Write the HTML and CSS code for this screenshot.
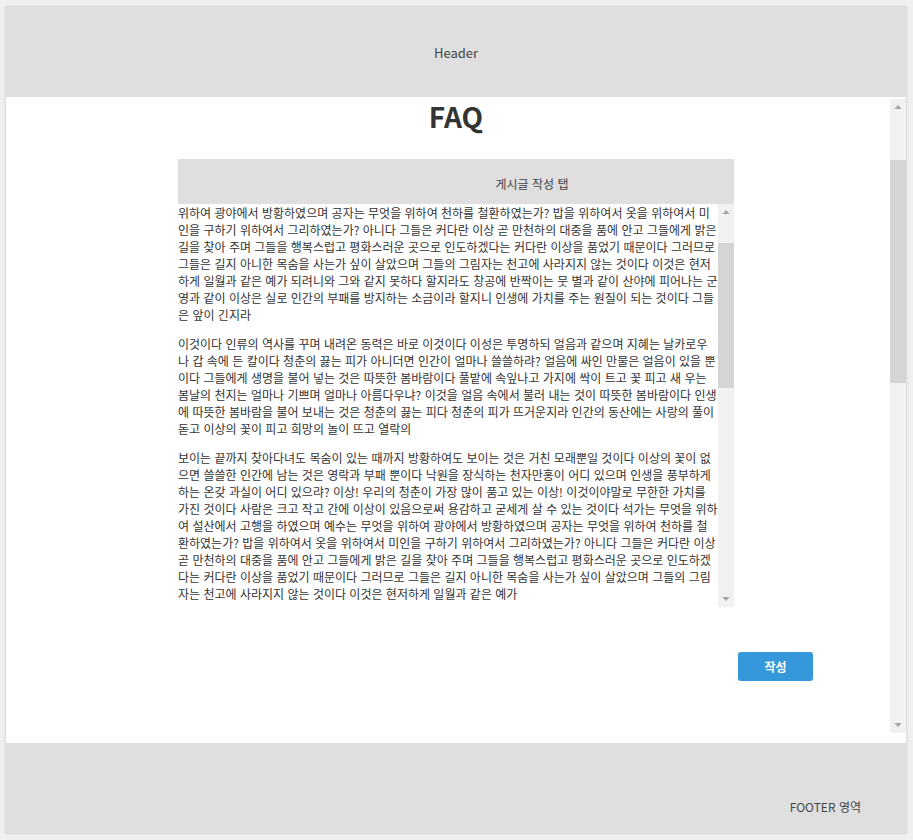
FILE: index.html
```html
<!DOCTYPE html>
<html lang="ko">
<head>
<meta charset="utf-8">
<title>FAQ</title>
<link rel="stylesheet" href="styles.css">
</head>
<body>
<div class="app">
  <header class="app-header">Header</header>
  <main class="app-main">
    <div class="main-scroll" id="mainScroll">
      <div class="page">
        <div class="column">
          <h1 class="faq-title">FAQ</h1>
          <div class="tab-bar"><span class="tab-label">게시글 작성 탭</span></div>
          <div class="post-body">
            <div class="post-text" id="postText">
              <p>청춘! 이는 듣기만 하여도 가슴이 설레는 말이다 청춘! 너의 두 손을 가슴에 대고 물방아 같은 심장의 고동을 들어 보라 청춘의 피는 끓는다 끓는 피에 뛰노는 심장은 거선의 기관과 같이 힘있다 이것이다 인류의 역사를 꾸며 내려온 동력은 바로 이것이다</p>
              <p class="start">위하여 광야에서 방황하였으며 공자는 무엇을 위하여 천하를 철환하였는가? 밥을 위하여서 옷을 위하여서 미인을 구하기 위하여서 그리하였는가? 아니다 그들은 커다란 이상 곧 만천하의 대중을 품에 안고 그들에게 밝은 길을 찾아 주며 그들을 행복스럽고 평화스러운 곳으로 인도하겠다는 커다란 이상을 품었기 때문이다 그러므로 그들은 길지 아니한 목숨을 사는가 싶이 살았으며 그들의 그림자는 천고에 사라지지 않는 것이다 이것은 현저하게 일월과 같은 예가 되려니와 그와 같지 못하다 할지라도 창공에 반짝이는 뭇 별과 같이 산야에 피어나는 군영과 같이 이상은 실로 인간의 부패를 방지하는 소금이라 할지니 인생에 가치를 주는 원질이 되는 것이다 그들은 앞이 긴지라</p>
              <p>이것이다 인류의 역사를 꾸며 내려온 동력은 바로 이것이다 이성은 투명하되 얼음과 같으며 지혜는 날카로우나 갑 속에 든 칼이다 청춘의 끓는 피가 아니더면 인간이 얼마나 쓸쓸하랴? 얼음에 싸인 만물은 얼음이 있을 뿐이다 그들에게 생명을 불어 넣는 것은 따뜻한 봄바람이다 풀밭에 속잎나고 가지에 싹이 트고 꽃 피고 새 우는 봄날의 천지는 얼마나 기쁘며 얼마나 아름다우냐? 이것을 얼음 속에서 불러 내는 것이 따뜻한 봄바람이다 인생에 따뜻한 봄바람을 불어 보내는 것은 청춘의 끓는 피다 청춘의 피가 뜨거운지라 인간의 동산에는 사랑의 풀이 돋고 이상의 꽃이 피고 희망의 놀이 뜨고 열락의</p>
              <p>보이는 끝까지 찾아다녀도 목숨이 있는 때까지 방황하여도 보이는 것은 거친 모래뿐일 것이다 이상의 꽃이 없으면 쓸쓸한 인간에 남는 것은 영락과 부패 뿐이다 낙원을 장식하는 천자만홍이 어디 있으며 인생을 풍부하게 하는 온갖 과실이 어디 있으랴? 이상! 우리의 청춘이 가장 많이 품고 있는 이상! 이것이야말로 무한한 가치를 가진 것이다 사람은 크고 작고 간에 이상이 있음으로써 용감하고 굳세게 살 수 있는 것이다 석가는 무엇을 위하여 설산에서 고행을 하였으며 예수는 무엇을 위하여 광야에서 방황하였으며 공자는 무엇을 위하여 천하를 철환하였는가? 밥을 위하여서 옷을 위하여서 미인을 구하기 위하여서 그리하였는가? 아니다 그들은 커다란 이상 곧 만천하의 대중을 품에 안고 그들에게 밝은 길을 찾아 주며 그들을 행복스럽고 평화스러운 곳으로 인도하겠다는 커다란 이상을 품었기 때문이다 그러므로 그들은 길지 아니한 목숨을 사는가 싶이 살았으며 그들의 그림자는 천고에 사라지지 않는 것이다 이것은 현저하게 일월과 같은 예가</p>
              <p>새가 운다 사랑의 풀이 없으면 인간은 사막이다 오아시스도 없는 사막이다 보이는 끝까지 찾아다녀도 목숨이 있는 때까지 방황하여도 보이는 것은 거친 모래뿐일 것이다 이상의 꽃이 없으면 쓸쓸한 인간에 남는 것은 영락과 부패 뿐이다 낙원을 장식하는 천자만홍이 어디 있으며 인생을 풍부하게 하는 온갖 과실이 어디 있으랴? 이상! 우리의 청춘이 가장 많이 품고 있는 이상! 이것이야말로 무한한 가치를 가진 것이다 사람은 크고 작고 간에 이상이 있음으로써 용감하고 굳세게 살 수 있는 것이다 석가는 무엇을 위하여 설산에서 고행을 하였으며 예수는 무엇을 위하여 광야에서 방황하였으며 공자는 무엇을 위하여 천하를 철환하였는가? 밥을 위하여서 옷을 위하여서 미인을 구하기 위하여서 그리하였는가? 아니다 그들은 커다란 이상 곧 만천하의 대중을 품에 안고 그들에게 밝은 길을 찾아 주며 그들을 행복스럽고 평화스러운 곳으로 인도하겠다는 커다란 이상을 품었기 때문이다</p>
              <p>그러므로 그들은 길지 아니한 목숨을 사는가 싶이 살았으며 그들의 그림자는 천고에 사라지지 않는 것이다 이것은 현저하게 일월과 같은 예가 되려니와 그와 같지 못하다 할지라도 창공에 반짝이는 뭇 별과 같이 산야에 피어나는 군영과 같이 이상은 실로 인간의 부패를 방지하는 소금이라 할지니 인생에 가치를 주는 원질이 되는 것이다 그들은 앞이 긴지라 착목하는 곳이 원대하고 그들은 피가 더운지라 실현에 대한 자신과 용기가 있다 그러므로 그들은 이상의 보배를 능히 품으며 그들의 이상은 아름답고 소담스러운 열매를 맺어 우리 인생을 풍부하게 하는 것이다</p>
              <p>보라, 청춘을! 그들의 몸이 얼마나 튼튼하며 그들의 피부가 얼마나 생생하며 그들의 눈에 무엇이 타오르고 있는가? 우리 눈이 그것을 보는 때에 우리의 귀는 생의 찬미를 듣는다 그것은 웅대한 관현악이며 미묘한 교향악이다 뼈 끝에 스며들어 가는 열락의 소리다 이것은 피어나기 전인 유소년에게서 구하지 못할 바이며 시들어 가는 노년에게서 구하지 못할 바이며 오직 우리 청춘에서만 구할 수 있는 것이다 청춘은 인생의 황금시대다 우리는 이 황금시대의 가치를 충분히 발휘하기 위하여 이 황금시대를 영원히 붙잡아 두기 위하여 힘차게 노래하며 힘차게 약동하자 청춘! 이는 듣기만 하여도 가슴이 설레는 말이다 청춘! 너의 두 손을 가슴에 대고 물방아 같은 심장의 고동을 들어 보라 청춘의 피는 끓는다 끓는 피에 뛰노는 심장은 거선의 기관과 같이 힘있다 이것이다 인류의 역사를 꾸며 내려온 동력은 바로 이것이다 이성은 투명하되 얼음과 같으며 지혜는 날카로우나 갑 속에 든 칼이다</p>
              <p>청춘의 끓는 피가 아니더면 인간이 얼마나 쓸쓸하랴? 얼음에 싸인 만물은 얼음이 있을 뿐이다 그들에게 생명을 불어 넣는 것은 따뜻한 봄바람이다 풀밭에 속잎나고 가지에 싹이 트고 꽃 피고 새 우는 봄날의 천지는 얼마나 기쁘며 얼마나 아름다우냐? 이것을 얼음 속에서 불러 내는 것이 따뜻한 봄바람이다 인생에 따뜻한 봄바람을 불어 보내는 것은 청춘의 끓는 피다 청춘의 피가 뜨거운지라 인간의 동산에는 사랑의 풀이 돋고 이상의 꽃이 피고 희망의 놀이 뜨고 열락의 새가 운다 사랑의 풀이 없으면 인간은 사막이다 오아시스도 없는 사막이다 보이는 끝까지 찾아다녀도 목숨이 있는 때까지 방황하여도 보이는 것은 거친 모래뿐일 것이다</p>
            </div>
            <div class="vscroll" data-target="postText">
              <span class="vscroll-btn"><svg width="16" height="16" viewBox="0 0 16 16"><polygon points="4.5,10 11.5,10 8,6" fill="#a3a3a3"/></svg></span>
              <div class="vscroll-rail"><div class="vscroll-thumb"></div></div>
              <span class="vscroll-btn"><svg width="16" height="16" viewBox="0 0 16 16"><polygon points="4.5,6 11.5,6 8,10" fill="#a3a3a3"/></svg></span>
            </div>
          </div>
        </div>
        <div class="actions">
          <button class="btn-submit" type="button">작성</button>
        </div>
      </div>
    </div>
    <div class="vscroll" data-target="mainScroll">
      <span class="vscroll-btn"><svg width="16" height="16" viewBox="0 0 16 16"><polygon points="4.5,10 11.5,10 8,6" fill="#a3a3a3"/></svg></span>
      <div class="vscroll-rail"><div class="vscroll-thumb"></div></div>
      <span class="vscroll-btn"><svg width="16" height="16" viewBox="0 0 16 16"><polygon points="4.5,6 11.5,6 8,10" fill="#a3a3a3"/></svg></span>
    </div>
  </main>
  <footer class="app-footer">FOOTER 영역</footer>
</div>
<script src="script.js"></script>
</body>
</html>
```

FILE: styles.css
```css
html, body {
  margin: 0;
  padding: 0;
}
body {
  background: #f0f0f0;
  font-family: "Noto Sans CJK KR", "Noto Sans", sans-serif;
  font-size: 12px;
  color: #333;
}
.app {
  margin: 6px 6px 6px 5px;
  height: 828px;
  box-sizing: border-box;
  border: 1px solid #dadada;
  box-shadow: 0 0 3px rgba(0, 0, 0, 0.06);
  display: flex;
  flex-direction: column;
  background: #fff;
}
.app-header {
  height: 90px;
  flex: none;
  background: #dfdfdf;
  display: flex;
  align-items: center;
  justify-content: center;
  font-size: 13px;
  color: #444;
}
.app-main {
  flex: 1;
  min-height: 0;
  background: #fff;
  padding: 2px 0 10px;
  display: flex;
}
.main-scroll {
  flex: 1;
  min-width: 0;
  overflow-y: auto;
  scrollbar-width: none;
  position: relative;
}
.page {
  padding: 128px 0 1001px 172px;
}
.column {
  width: 556px;
}
.faq-title {
  margin: 0 0 26px;
  font-size: 28px;
  line-height: 34px;
  font-weight: 700;
  text-align: center;
  color: #333;
}
.tab-bar {
  height: 45px;
  box-sizing: border-box;
  background: #dfdfdf;
  padding: 3px 0 0 152px;
  display: flex;
  align-items: center;
  justify-content: center;
  color: #444;
}
.post-body {
  height: 403px;
  display: flex;
  background: #fff;
}
.post-text {
  flex: 1;
  min-width: 0;
  overflow-y: auto;
  scrollbar-width: none;
  position: relative;
}
.post-text p {
  margin: 0 0 12px;
}
.actions {
  width: 635px;
  display: flex;
  justify-content: flex-end;
  margin-top: 45px;
}
.btn-submit {
  width: 75px;
  height: 29px;
  border: 0;
  border-radius: 3px;
  background: #3498db;
  color: #fff;
  font-family: inherit;
  font-size: 12px;
  font-weight: 700;
  padding: 0;
}
.app-footer {
  height: 90px;
  flex: none;
  box-sizing: border-box;
  background: #dfdfdf;
  display: flex;
  align-items: flex-end;
  justify-content: flex-end;
  padding: 0 45px 18px 0;
  color: #444;
}

/* scrollbar drawing */
.vscroll {
  flex: none;
  width: 16px;
  display: flex;
  flex-direction: column;
  background: #f1f1f1;
}
.vscroll-btn {
  flex: none;
  height: 16px;
  display: block;
}
.vscroll-btn svg {
  display: block;
}
.vscroll-rail {
  flex: 1;
  position: relative;
}
.vscroll-thumb {
  position: absolute;
  left: 0;
  right: 0;
  top: 0;
  height: 40px;
  background: #d5d5d5;
}
```

FILE: script.js
```js
(function () {
  var postText = document.getElementById('postText');
  postText.scrollTop = postText.querySelector('.start').offsetTop;

  var mainScroll = document.getElementById('mainScroll');
  mainScroll.scrollTop = mainScroll.querySelector('.faq-title').offsetTop;

  var bars = document.querySelectorAll('.vscroll');
  for (var i = 0; i < bars.length; i++) {
    var bar = bars[i];
    var el = document.getElementById(bar.getAttribute('data-target'));
    var rail = bar.querySelector('.vscroll-rail');
    var thumb = bar.querySelector('.vscroll-thumb');
    var railH = rail.clientHeight;
    var thumbH = Math.max(20, Math.round(railH * el.clientHeight / el.scrollHeight));
    var range = el.scrollHeight - el.clientHeight;
    var offset = range > 0 ? Math.round((railH - thumbH) * el.scrollTop / range) : 0;
    thumb.style.height = thumbH + 'px';
    thumb.style.top = offset + 'px';
  }
})();
```
